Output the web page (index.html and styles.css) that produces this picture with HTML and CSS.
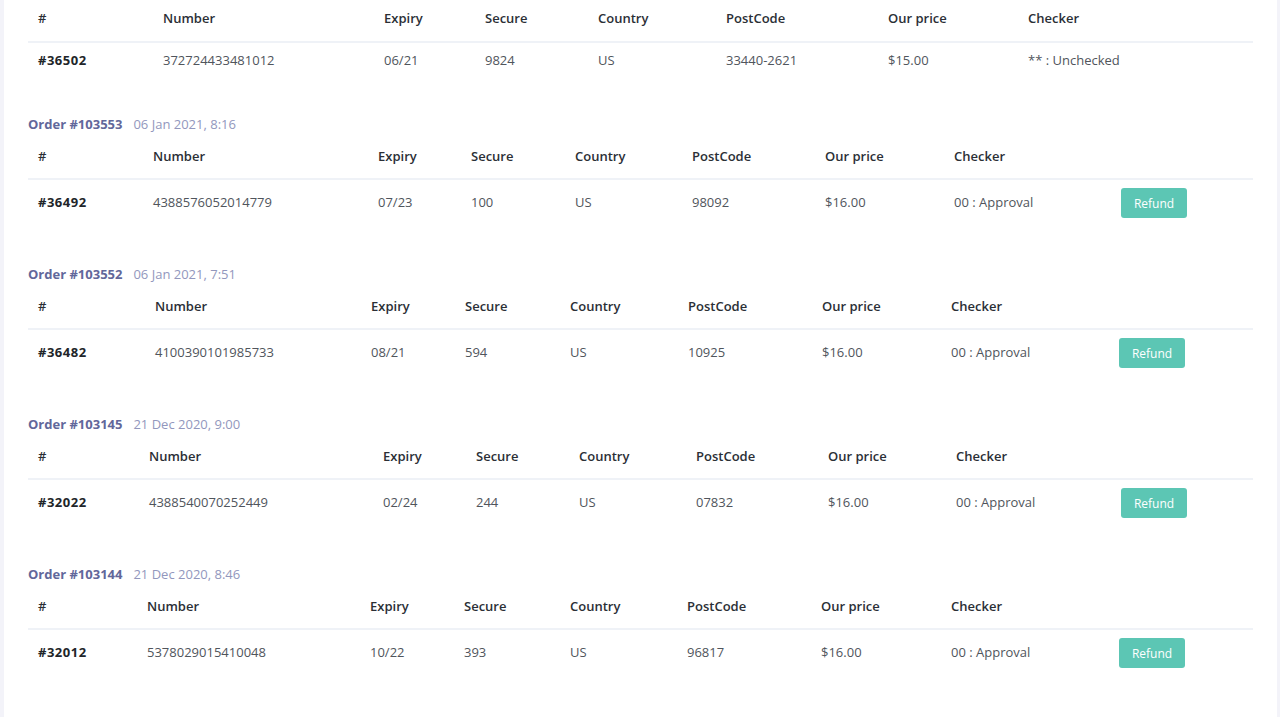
FILE: index.html
```html
<!DOCTYPE html>
<html lang="en">
<head>
<meta charset="utf-8">
<title>Orders</title>
<link rel="stylesheet" href="styles.css">
</head>
<body>
<div class="page">
  <div class="card">

    <section class="order order-first">
      <table class="cards t1">
        <colgroup><col><col><col><col><col><col><col><col></colgroup>
        <thead>
          <tr><th>#</th><th>Number</th><th>Expiry</th><th>Secure</th><th>Country</th><th>PostCode</th><th>Our price</th><th>Checker</th></tr>
        </thead>
        <tbody>
          <tr><td class="id">#36502</td><td>372724433481012</td><td>06/21</td><td>9824</td><td>US</td><td>33440-2621</td><td>$15.00</td><td>** : Unchecked</td></tr>
        </tbody>
      </table>
    </section>

    <section class="order">
      <div class="order-title"><span class="order-no">Order #103553</span><span class="order-date">06 Jan 2021, 8:16</span></div>
      <table class="cards t2">
        <colgroup><col><col><col><col><col><col><col><col><col></colgroup>
        <thead>
          <tr><th>#</th><th>Number</th><th>Expiry</th><th>Secure</th><th>Country</th><th>PostCode</th><th>Our price</th><th>Checker</th><th></th></tr>
        </thead>
        <tbody>
          <tr><td class="id">#36492</td><td>4388576052014779</td><td>07/23</td><td>100</td><td>US</td><td>98092</td><td>$16.00</td><td>00 : Approval</td><td><button class="btn-refund" type="button">Refund</button></td></tr>
        </tbody>
      </table>
    </section>

    <section class="order">
      <div class="order-title"><span class="order-no">Order #103552</span><span class="order-date">06 Jan 2021, 7:51</span></div>
      <table class="cards t3">
        <colgroup><col><col><col><col><col><col><col><col><col></colgroup>
        <thead>
          <tr><th>#</th><th>Number</th><th>Expiry</th><th>Secure</th><th>Country</th><th>PostCode</th><th>Our price</th><th>Checker</th><th></th></tr>
        </thead>
        <tbody>
          <tr><td class="id">#36482</td><td>4100390101985733</td><td>08/21</td><td>594</td><td>US</td><td>10925</td><td>$16.00</td><td>00 : Approval</td><td><button class="btn-refund" type="button">Refund</button></td></tr>
        </tbody>
      </table>
    </section>

    <section class="order">
      <div class="order-title"><span class="order-no">Order #103145</span><span class="order-date">21 Dec 2020, 9:00</span></div>
      <table class="cards t4">
        <colgroup><col><col><col><col><col><col><col><col><col></colgroup>
        <thead>
          <tr><th>#</th><th>Number</th><th>Expiry</th><th>Secure</th><th>Country</th><th>PostCode</th><th>Our price</th><th>Checker</th><th></th></tr>
        </thead>
        <tbody>
          <tr><td class="id">#32022</td><td>4388540070252449</td><td>02/24</td><td>244</td><td>US</td><td>07832</td><td>$16.00</td><td>00 : Approval</td><td><button class="btn-refund" type="button">Refund</button></td></tr>
        </tbody>
      </table>
    </section>

    <section class="order">
      <div class="order-title"><span class="order-no">Order #103144</span><span class="order-date">21 Dec 2020, 8:46</span></div>
      <table class="cards t5">
        <colgroup><col><col><col><col><col><col><col><col><col></colgroup>
        <thead>
          <tr><th>#</th><th>Number</th><th>Expiry</th><th>Secure</th><th>Country</th><th>PostCode</th><th>Our price</th><th>Checker</th><th></th></tr>
        </thead>
        <tbody>
          <tr><td class="id">#32012</td><td>5378029015410048</td><td>10/22</td><td>393</td><td>US</td><td>96817</td><td>$16.00</td><td>00 : Approval</td><td><button class="btn-refund" type="button">Refund</button></td></tr>
        </tbody>
      </table>
    </section>

  </div>
</div>
</body>
</html>
```
FILE: styles.css
```css
html, body {
  margin: 0;
  padding: 0;
}

body {
  font-family: "Open Sans", "Liberation Sans", sans-serif;
  font-size: 13px;
  line-height: 1.5;
  color: #495057;
  background: #f3f3f9;
  overflow: hidden;
}

.page {
  display: flex;
  min-height: 100vh;
  padding: 0 3px 0 4px;
  box-sizing: border-box;
}

.card {
  flex: 1;
  background: #ffffff;
  padding: 0 24px;
}

.order {
  margin-bottom: 39px;
}

.order-first {
  margin-top: -3px;
  margin-bottom: 37px;
}

.order-title {
  display: flex;
  gap: 11px;
  line-height: 19.5px;
}

.order-no {
  font-weight: 700;
  color: #62679a;
}

.order-date {
  color: #9297bd;
}

.cards {
  width: 100%;
  table-layout: fixed;
  border-collapse: collapse;
}

.cards th,
.cards td {
  text-align: left;
  white-space: nowrap;
  vertical-align: middle;
}

.cards th {
  padding: 12px 10px;
  font-weight: 600;
  color: #2b2f36;
  border-bottom: 2px solid #eff2f7;
}

.cards td {
  padding: 8px 10px;
  color: #50555c;
}

.cards td.id {
  font-weight: 700;
  color: #212529;
  letter-spacing: 0.5px;
}

.btn-refund {
  display: block;
  width: 66px;
  height: 30px;
  padding: 0;
  border: 0;
  border-radius: 3px;
  background: #5cc6b4;
  color: #ffffff;
  font-family: inherit;
  font-size: 12px;
}

/* column widths per table (auto layout of the original) */
.t1 col:nth-child(1) { width: 125px; }
.t1 col:nth-child(2) { width: 221px; }
.t1 col:nth-child(3) { width: 101px; }
.t1 col:nth-child(4) { width: 113px; }
.t1 col:nth-child(5) { width: 128px; }
.t1 col:nth-child(6) { width: 162px; }
.t1 col:nth-child(7) { width: 140px; }

.t2 col:nth-child(1) { width: 115px; }
.t2 col:nth-child(2) { width: 225px; }
.t2 col:nth-child(3) { width: 93px; }
.t2 col:nth-child(4) { width: 104px; }
.t2 col:nth-child(5) { width: 117px; }
.t2 col:nth-child(6) { width: 133px; }
.t2 col:nth-child(7) { width: 129px; }
.t2 col:nth-child(8) { width: 167px; }

.t3 col:nth-child(1) { width: 117px; }
.t3 col:nth-child(2) { width: 216px; }
.t3 col:nth-child(3) { width: 94px; }
.t3 col:nth-child(4) { width: 105px; }
.t3 col:nth-child(5) { width: 118px; }
.t3 col:nth-child(6) { width: 134px; }
.t3 col:nth-child(7) { width: 129px; }
.t3 col:nth-child(8) { width: 168px; }

.t4 col:nth-child(1) { width: 111px; }
.t4 col:nth-child(2) { width: 234px; }
.t4 col:nth-child(3) { width: 93px; }
.t4 col:nth-child(4) { width: 103px; }
.t4 col:nth-child(5) { width: 117px; }
.t4 col:nth-child(6) { width: 132px; }
.t4 col:nth-child(7) { width: 128px; }
.t4 col:nth-child(8) { width: 165px; }

.t5 col:nth-child(1) { width: 109px; }
.t5 col:nth-child(2) { width: 223px; }
.t5 col:nth-child(3) { width: 94px; }
.t5 col:nth-child(4) { width: 106px; }
.t5 col:nth-child(5) { width: 117px; }
.t5 col:nth-child(6) { width: 134px; }
.t5 col:nth-child(7) { width: 130px; }
.t5 col:nth-child(8) { width: 168px; }
```
